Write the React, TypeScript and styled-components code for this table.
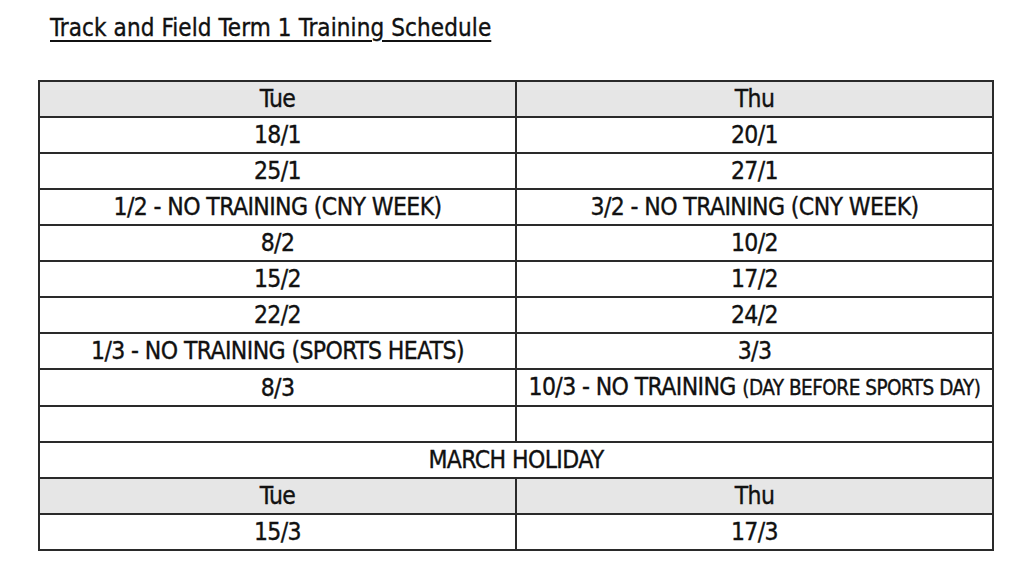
import styled, { createGlobalStyle } from "styled-components";

const GlobalStyle = createGlobalStyle`
  html, body {
    margin: 0;
    padding: 0;
    background: #ffffff;
  }
  body {
    font-family: "DejaVu Sans Condensed", "DejaVu Sans", sans-serif;
    color: #111111;
    -webkit-text-stroke: 0.35px #111111;
  }
`;

const Page = styled.div`
  width: 1024px;
  height: 564px;
  box-sizing: border-box;
  padding: 12px 30px 0 38px;
  overflow: hidden;
`;

const Title = styled.h1`
  margin: 0 0 0 12px;
  font-size: 24px;
  font-weight: normal;
  line-height: 32px;
  letter-spacing: 0.1px;
  text-decoration: underline;
  text-decoration-thickness: 2px;
  text-underline-offset: 4px;
`;

const Table = styled.table`
  margin-top: 36px;
  width: 956px;
  border-collapse: collapse;
  table-layout: fixed;
`;

const Cell = styled.td<{ $head?: boolean }>`
  height: 34px;
  padding: 0;
  border: 2px solid #2a2a2a;
  text-align: center;
  vertical-align: middle;
  font-size: 24.5px;
  letter-spacing: -0.6px;
  line-height: 34px;
  white-space: nowrap;
  background: ${(p) => (p.$head ? "#e6e6e6" : "#ffffff")};
`;

const Note = styled.span`
  font-size: 20.5px;
  letter-spacing: -0.5px;
`;

type Row = [React.ReactNode, React.ReactNode];

const termRows: Row[] = [
  ["18/1", "20/1"],
  ["25/1", "27/1"],
  ["1/2 - NO TRAINING (CNY WEEK)", "3/2 - NO TRAINING (CNY WEEK)"],
  ["8/2", "10/2"],
  ["15/2", "17/2"],
  ["22/2", "24/2"],
  ["1/3 - NO TRAINING (SPORTS HEATS)", "3/3"],
  [
    "8/3",
    <>
      10/3 - NO TRAINING <Note>(DAY BEFORE SPORTS DAY)</Note>
    </>,
  ],
  ["", ""],
];

const App = () => {
  return (
    <Page>
      <GlobalStyle />
      <Title>Track and Field Term 1 Training Schedule</Title>
      <Table>
        <tbody>
          <tr>
            <Cell $head>Tue</Cell>
            <Cell $head>Thu</Cell>
          </tr>
          {termRows.map((row, i) => (
            <tr key={i}>
              <Cell>{row[0]}</Cell>
              <Cell>{row[1]}</Cell>
            </tr>
          ))}
          <tr>
            <Cell colSpan={2}>MARCH HOLIDAY</Cell>
          </tr>
          <tr>
            <Cell $head>Tue</Cell>
            <Cell $head>Thu</Cell>
          </tr>
          <tr>
            <Cell>15/3</Cell>
            <Cell>17/3</Cell>
          </tr>
        </tbody>
      </Table>
    </Page>
  );
};

export default App;
